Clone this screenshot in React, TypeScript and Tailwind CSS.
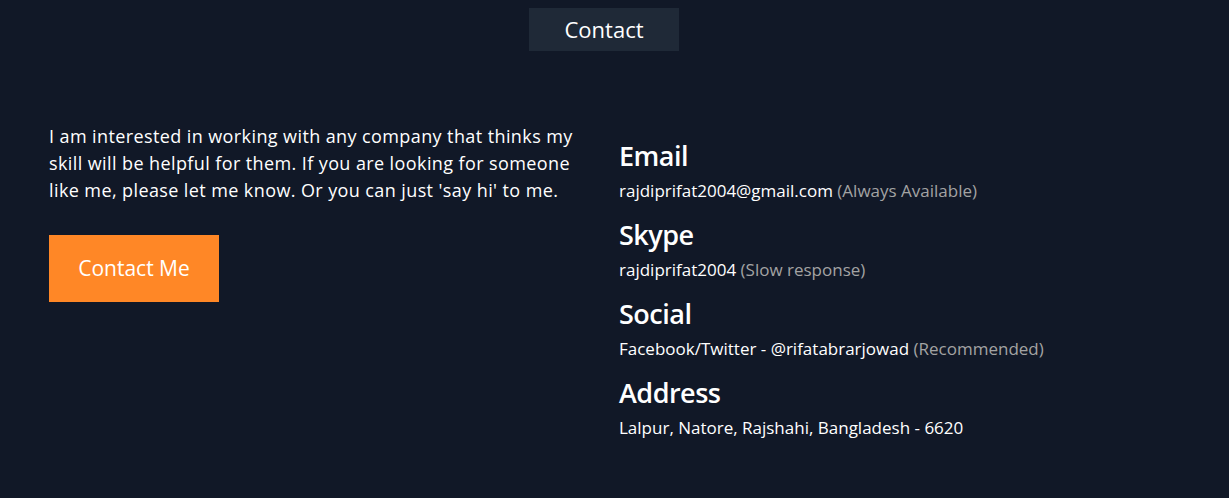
import React from 'react';

const items = [
  { title: 'Email', value: 'rajdiprifat2004@gmail.com', note: '(Always Available)' },
  { title: 'Skype', value: 'rajdiprifat2004', note: '(Slow response)' },
  { title: 'Social', value: 'Facebook/Twitter - @rifatabrarjowad', note: '(Recommended)' },
  { title: 'Address', value: 'Lalpur, Natore, Rajshahi, Bangladesh - 6620', note: '' },
];

export default function App() {
  return (
    <div
      className="min-h-[498px] bg-[#111827] text-white"
      style={{ fontFamily: '"Open Sans", "Noto Sans", sans-serif' }}
    >
      <div className="flex justify-center pr-[21px] pt-2">
        <div className="flex h-[43px] w-[150px] items-center justify-center bg-[#1f2937] text-[22px]">
          Contact
        </div>
      </div>

      <div className="grid grid-cols-[535px_1fr] gap-[35px] pl-[49px] pt-[70px]">
        <div>
          <p className="mt-[2px] text-[18px] leading-[27px] tracking-[0.4px]">
            I am interested in working with any company that thinks my skill will be helpful for them. If you are
            looking for someone like me, please let me know. Or you can just 'say hi' to me.
          </p>
          <button className="mt-[31px] flex h-[67px] w-[170px] items-center justify-center bg-[#ff8726] text-[21px] text-white">
            Contact Me
          </button>
        </div>

        <div className="flex flex-col gap-[12px] pt-[17px]">
          {items.map((item) => (
            <div key={item.title}>
              <h3 className="text-[27px] font-semibold leading-[36px] tracking-[-0.5px]">{item.title}</h3>
              <p className="mt-[3px] text-[17px] leading-[28px]">
                {item.value}
                {item.note && <span className="text-[#a3a3a3]"> {item.note}</span>}
              </p>
            </div>
          ))}
        </div>
      </div>
    </div>
  );
}
